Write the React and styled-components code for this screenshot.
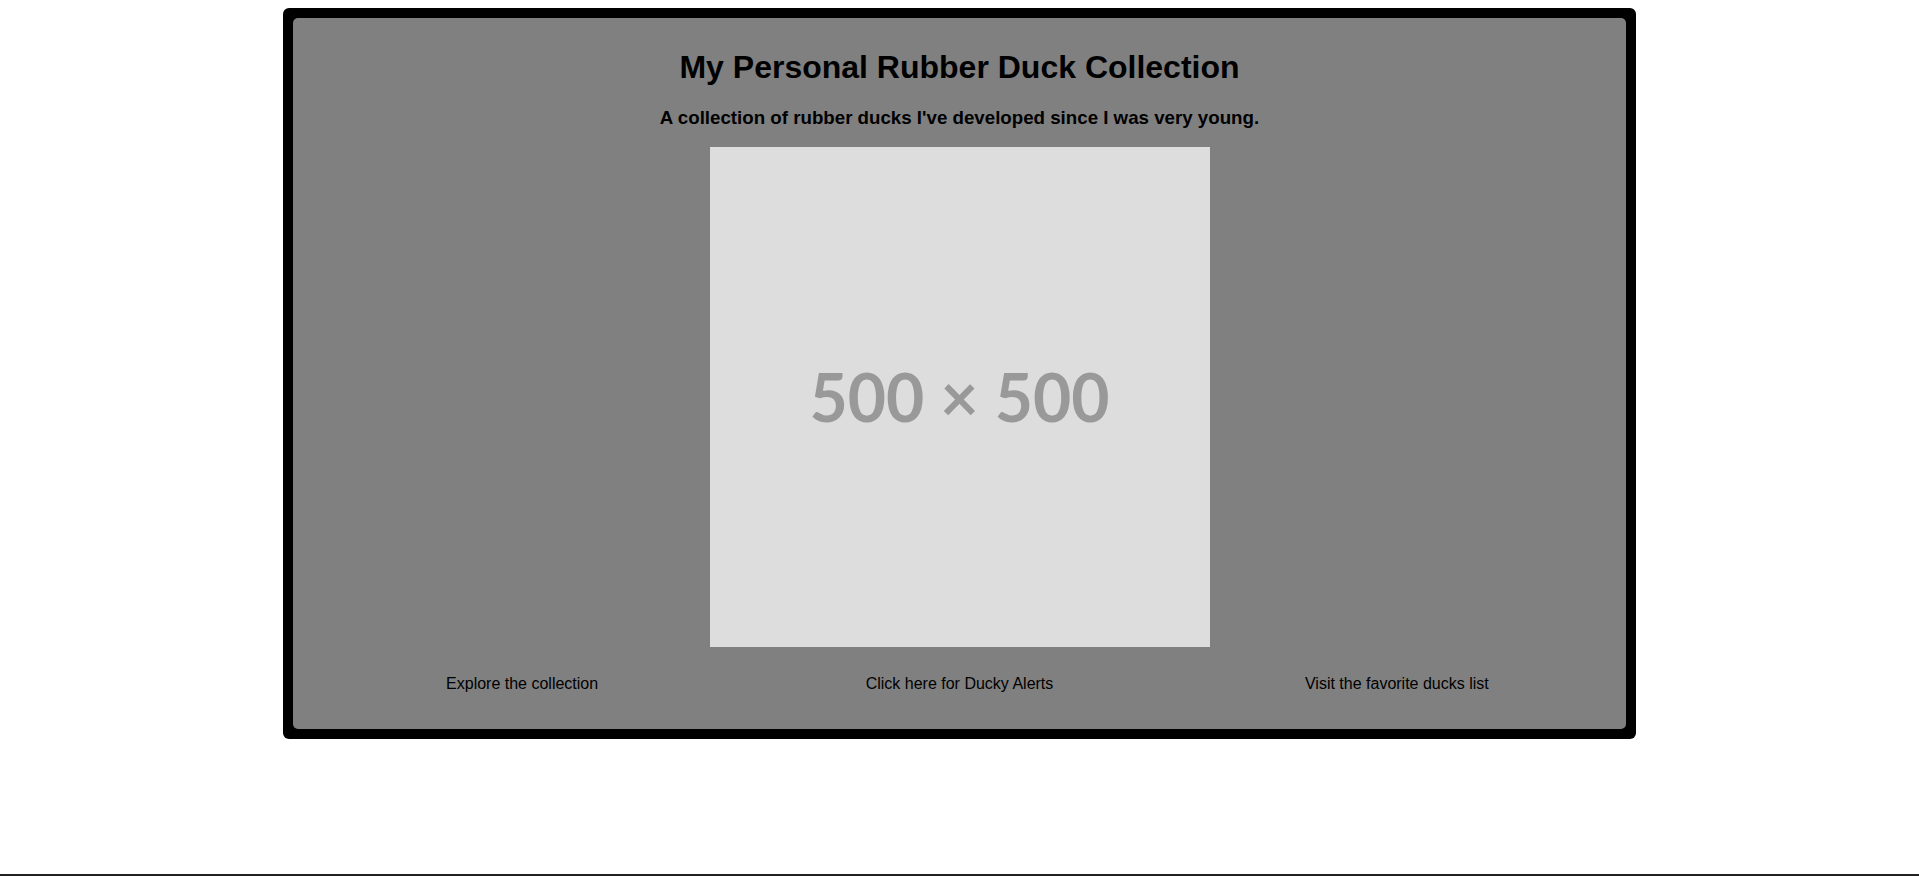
import styled, { createGlobalStyle } from "styled-components";

const GlobalStyle = createGlobalStyle`
  html {
    height: 100%;
    box-sizing: border-box;
    border-bottom: 2px solid #222;
  }
  body {
    margin: 8px;
    font-family: "Liberation Sans", Arial, sans-serif;
    color: #000;
    background: #fff;
  }
`;

const links = [
  "Explore the collection",
  "Click here for Ducky Alerts",
  "Visit the favorite ducks list",
];

const App = () => {
  return (
    <>
      <GlobalStyle />
      <Frame>
        <Panel>
          <Title>My Personal Rubber Duck Collection</Title>
          <Subtitle>A collection of rubber ducks I've developed since I was very young.</Subtitle>
          <Placeholder>
            <span>500 × 500</span>
          </Placeholder>
          <Nav>
            {links.map((label) => (
              <NavLink key={label} href="#">
                {label}
              </NavLink>
            ))}
          </Nav>
        </Panel>
      </Frame>
    </>
  );
};

const Frame = styled.div`
  width: 70%;
  margin: 0 auto;
  padding: 10px;
  background: #000;
  border-radius: 6px;
`;

const Panel = styled.div`
  background: #808080;
  border-radius: 5px;
  padding: 10px;
  display: flow-root;
`;

const Title = styled.h1`
  font-size: 32px;
  font-weight: bold;
  text-align: center;
  margin: 21.44px 0 20.7px;
`;

const Subtitle = styled.h3`
  font-size: 18.72px;
  font-weight: bold;
  text-align: center;
  margin: 20.7px 0 18px;
`;

const Placeholder = styled.div`
  width: 500px;
  height: 500px;
  margin: 0 auto;
  background: #dddddd;
  display: flex;
  align-items: center;
  justify-content: center;

  span {
    font-family: Lato, "Open Sans", sans-serif;
    font-weight: 700;
    font-size: 66px;
    color: #999999;
    line-height: 1;
  }
`;

const Nav = styled.nav`
  display: grid;
  grid-template-columns: repeat(3, 1fr);
  margin: 28px 0 26px;
`;

const NavLink = styled.a`
  text-align: center;
  font-size: 16px;
  color: #000;
  text-decoration: none;
`;

export default App;
